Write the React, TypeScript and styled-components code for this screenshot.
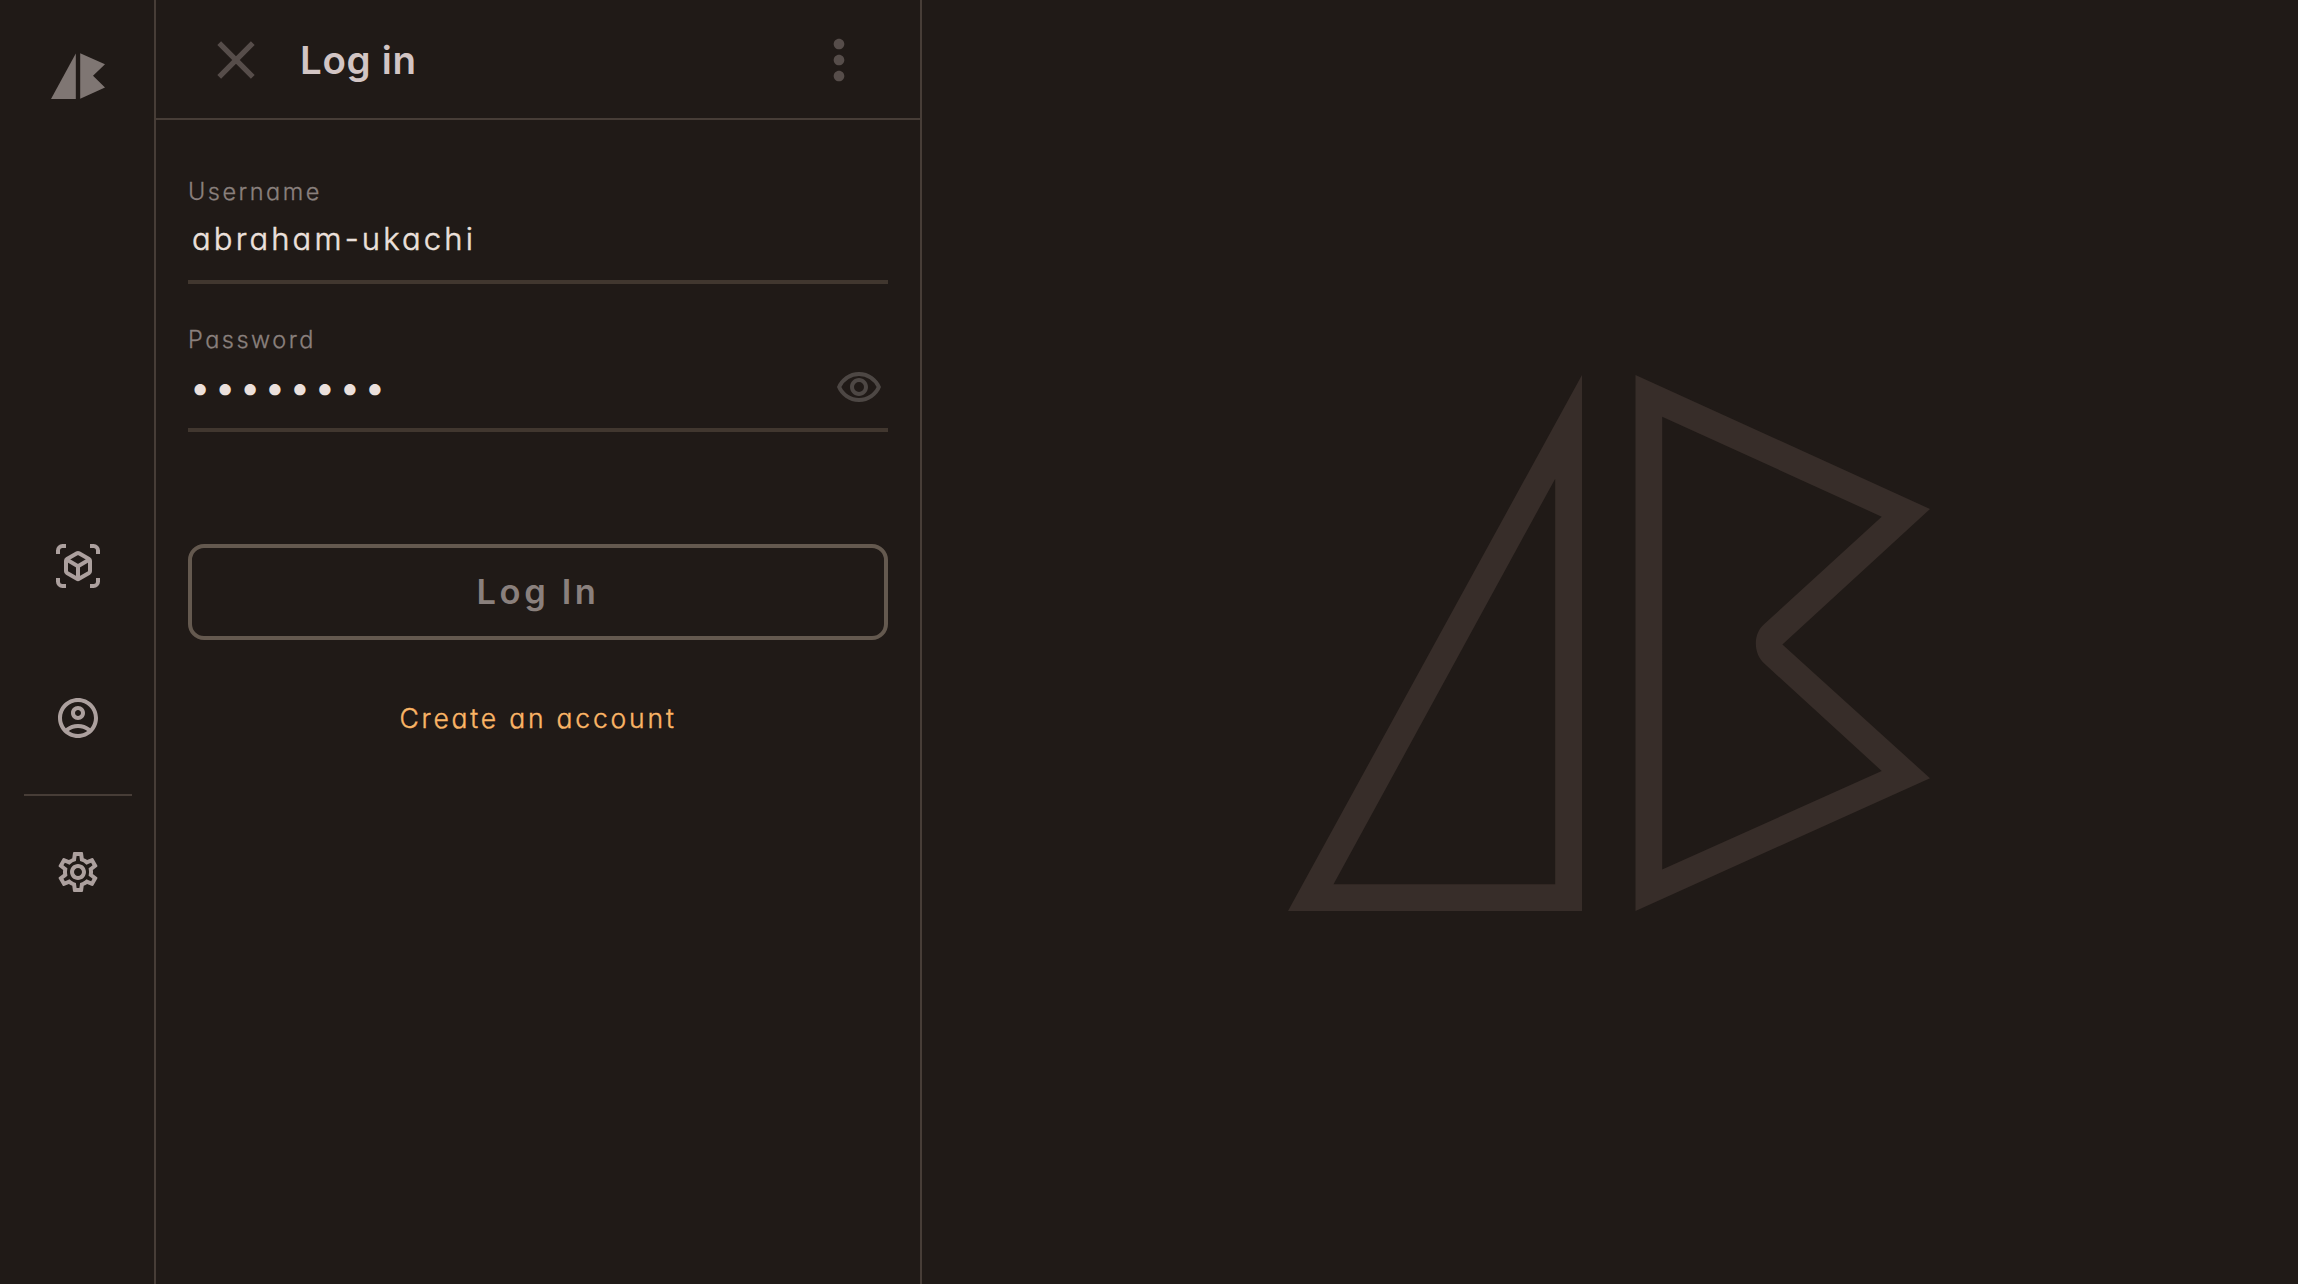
import React from 'react';
import styled, { createGlobalStyle } from 'styled-components';
import {
  MdClose,
  MdMoreVert,
  MdOutlineAccountCircle,
  MdOutlineSettings,
  MdOutlineVisibility,
} from 'react-icons/md';

const color = {
  surface: '#201a17',
  divider: '#473d37',
  fieldLine: '#41372f',
  outline: '#64594f',
  muted: '#8a807d',
  icon: '#aca09e',
  dimIcon: '#564d4a',
  eye: '#4d4744',
  title: '#d2c5c4',
  text: '#ebe0dc',
  accent: '#fbb566',
  mark: '#372d29',
};

const GlobalStyle = createGlobalStyle`
  * { box-sizing: border-box; }
  body {
    margin: 0;
    background: ${color.surface};
    font-family: Inter, 'Open Sans', sans-serif;
    font-feature-settings: 'cv11' 1;
  }
  svg { display: block; }
`;

const Page = styled.div`
  display: grid;
  grid-template-columns: 156px 766px 1fr;
  height: 100vh;
  overflow: hidden;
`;

const Rail = styled.nav`
  display: flex;
  flex-direction: column;
  align-items: center;
  padding: 53px 0 0 2px;
  border-right: 2px solid ${color.divider};
  color: ${color.icon};
`;

const RailItems = styled.div`
  display: flex;
  flex-direction: column;
  align-items: center;
  margin-top: 443px;
`;

const RailButton = styled.button<{ $gap?: number }>`
  display: flex;
  padding: 0;
  margin: 0 0 ${(p) => p.$gap ?? 0}px;
  border: 0;
  background: none;
  color: inherit;
  font-size: 48px;
`;

const RailDivider = styled.hr`
  width: 108px;
  height: 2px;
  margin: 0 0 52px;
  border: 0;
  background: ${color.divider};
`;

const Panel = styled.section`
  display: flex;
  flex-direction: column;
  border-right: 2px solid ${color.divider};
`;

const Header = styled.header`
  display: flex;
  align-items: center;
  height: 120px;
  padding: 2px 49px 0 48px;
  border-bottom: 2px solid ${color.divider};
`;

const HeaderButton = styled.button`
  display: flex;
  padding: 0;
  border: 0;
  background: none;
  color: ${color.dimIcon};
  font-size: 64px;
`;

const Title = styled.h1`
  flex: 1;
  margin: 0 0 0 32px;
  color: ${color.title};
  font-size: 38.5px;
  font-weight: 600;
  letter-spacing: 0.7px;
  line-height: 48px;
`;

const Form = styled.form`
  display: flex;
  flex-direction: column;
  padding: 56px 32px 0;
`;

const Field = styled.div`
  display: flex;
  flex-direction: column;
  height: 108px;
  margin-bottom: 40px;
  border-bottom: 4px solid ${color.fieldLine};
`;

const Label = styled.label`
  height: 30px;
  color: ${color.muted};
  font-size: 23.5px;
  font-weight: 300;
  -webkit-text-stroke: 0.3px currentColor;
  letter-spacing: 2.5px;
  line-height: 32px;
`;

const FieldRow = styled.div`
  display: flex;
  align-items: center;
  justify-content: space-between;
  height: 66px;
  padding: 0 5px 0 4px;
`;

const Value = styled.span<{ $masked?: boolean }>`
  margin-left: ${(p) => (p.$masked ? -2 : 0)}px;
  color: ${color.text};
  font-size: ${(p) => (p.$masked ? 36 : 31)}px;
  font-weight: ${(p) => (p.$masked ? 400 : 300)};
  -webkit-text-stroke: ${(p) => (p.$masked ? 0 : 0.5)}px currentColor;
  letter-spacing: ${(p) => (p.$masked ? 4.7 : 3.15)}px;
  line-height: 40px;
`;

const Reveal = styled.button`
  display: flex;
  padding: 2px 0 0;
  border: 0;
  background: none;
  color: ${color.eye};
  font-size: 48px;
`;

const Submit = styled.button`
  height: 96px;
  margin-top: 72px;
  border: 4px solid ${color.outline};
  border-radius: 16px;
  background: none;
  color: ${color.muted};
  font-family: inherit;
  font-feature-settings: inherit;
  font-size: 34.5px;
  font-weight: 600;
  letter-spacing: 3.6px;
  line-height: 44px;
`;

const Create = styled.a`
  align-self: center;
  margin-top: 60px;
  color: ${color.accent};
  font-size: 26.5px;
  font-weight: 300;
  -webkit-text-stroke: 0.4px currentColor;
  letter-spacing: 2.8px;
  line-height: 36px;
`;

const Stage = styled.main`
  display: flex;
  align-items: center;
  justify-content: center;
  padding: 1px 2px 0 0;
`;

const SmallLogo = () => (
  <svg width="54" height="46" viewBox="0 0 54 46" fill="#7f7673">
    <path d="M0 46H24.8V0.5Z" />
    <path d="M29.2 0.3L54 11.3L42 22.8L54 34.5L29.2 45.7Z" />
  </svg>
);

const CubeScanIcon = () => (
  <svg
    width="48"
    height="48"
    viewBox="0 0 48 48"
    fill="none"
    stroke="currentColor"
    strokeWidth="4"
    strokeLinejoin="round"
  >
    <path d="M4 12V8.5A4.5 4.5 0 0 1 8.5 4H12M36 4H39.5A4.5 4.5 0 0 1 44 8.5V12M44 36V39.5A4.5 4.5 0 0 1 39.5 44H36M12 44H8.5A4.5 4.5 0 0 1 4 39.5V36" />
    <path d="M23 11.2Q24 10.6 25 11.2L35 17Q36 17.6 36 18.8V29.2Q36 30.4 35 31L25 36.8Q24 37.4 23 36.8L13 31Q12 30.4 12 29.2V18.8Q12 17.6 13 17Z" />
    <path d="M12.6 17.6L24 24.2L35.4 17.6M24 24.2V37" />
  </svg>
);

const LargeLogo = () => (
  <svg
    width="642"
    height="536"
    viewBox="0 0 642 535"
    preserveAspectRatio="none"
    fill={color.mark}
    fillRule="evenodd"
  >
    <path d="M0 535H294V0ZM45.5 508.3H267.2V103.5Z" />
    <path d="M347.5 0L642 133.7L494.4 269L642 402.5L347.5 535ZM374.2 41.6V493.7L593.7 395.2L476.3 288C465 278 465 258 476.3 248.6L593.7 141.4Z" />
  </svg>
);

export default function App() {
  return (
    <>
      <GlobalStyle />
      <Page>
        <Rail>
          <SmallLogo />
          <RailItems>
            <RailButton aria-label="Explore" $gap={104}>
              <CubeScanIcon />
            </RailButton>
            <RailButton aria-label="Account" $gap={52}>
              <MdOutlineAccountCircle />
            </RailButton>
            <RailDivider />
            <RailButton aria-label="Settings">
              <MdOutlineSettings />
            </RailButton>
          </RailItems>
        </Rail>
        <Panel>
          <Header>
            <HeaderButton aria-label="Close">
              <MdClose />
            </HeaderButton>
            <Title>Log in</Title>
            <HeaderButton aria-label="More">
              <MdMoreVert />
            </HeaderButton>
          </Header>
          <Form>
            <Field>
              <Label>Username</Label>
              <FieldRow>
                <Value>abraham-ukachi</Value>
              </FieldRow>
            </Field>
            <Field>
              <Label>Password</Label>
              <FieldRow>
                <Value $masked>••••••••</Value>
                <Reveal type="button" aria-label="Show password">
                  <MdOutlineVisibility />
                </Reveal>
              </FieldRow>
            </Field>
            <Submit type="button">Log In</Submit>
            <Create>Create an account</Create>
          </Form>
        </Panel>
        <Stage>
          <LargeLogo />
        </Stage>
      </Page>
    </>
  );
}
